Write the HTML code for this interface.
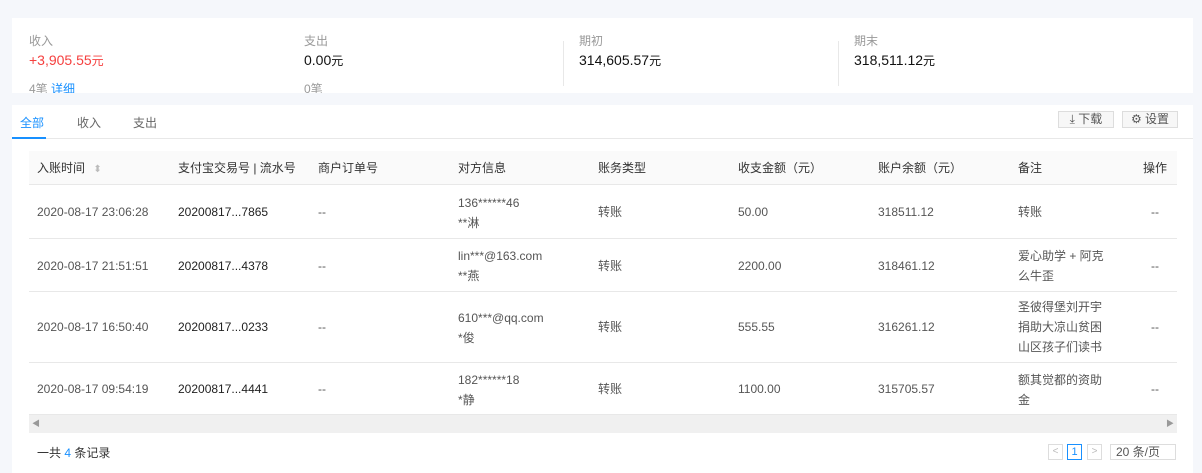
<!DOCTYPE html>
<html><head><meta charset="utf-8"><style>
*{margin:0;padding:0;box-sizing:border-box}
body{width:1202px;height:473px;overflow:hidden;background:#f5f7fb;font-family:"Liberation Sans","Noto Sans CJK SC",sans-serif;font-size:12px;color:#333;position:relative}
.a{position:absolute;white-space:nowrap}
.card1{position:absolute;left:12px;top:18px;width:1181px;height:75px;background:#fff;overflow:hidden}
.card2{position:absolute;left:12px;top:105px;width:1181px;height:368px;background:#fff}
.lbl{color:#999;font-size:12px}
.val{font-size:14px;color:#111}
.sep{position:absolute;top:23px;width:1px;height:45px;background:#e8e8e8}
.hdr{position:absolute;left:29px;top:151px;width:1148px;height:34px;background:#fafafa;border-bottom:1px solid #e8e8e8}
.row{position:absolute;left:29px;width:1148px;border-bottom:1px solid #e8e8e8}
.c{position:absolute;color:#555;font-size:12px;line-height:20px}
.btn{position:absolute;top:111px;height:17px;border:1px solid #ddd;background:#f7f7f7;color:#555;font-size:12px;line-height:15px;text-align:center}
</style></head><body>
<div class="card1">
<div class="a lbl" style="left:17px;top:14px">收入</div>
<div class="a val" style="left:17px;top:34px;color:#f5403f">+3,905.55<span style="font-size:12px">元</span></div>
<div class="a lbl" style="left:17px;top:62px">4笔 <span style="color:#1890ff">详细</span></div>
<div class="a lbl" style="left:292px;top:14px">支出</div>
<div class="a val" style="left:292px;top:34px">0.00<span style="font-size:12px">元</span></div>
<div class="a lbl" style="left:292px;top:62px">0笔</div>
<div class="sep" style="left:551px"></div>
<div class="a lbl" style="left:567px;top:14px">期初</div>
<div class="a val" style="left:567px;top:34px">314,605.57<span style="font-size:12px">元</span></div>
<div class="sep" style="left:826px"></div>
<div class="a lbl" style="left:842px;top:14px">期末</div>
<div class="a val" style="left:842px;top:34px">318,511.12<span style="font-size:12px">元</span></div>
</div>
<div class="card2"></div>
<div class="a" style="left:20px;top:114px;color:#1890ff;font-size:12px">全部</div>
<div class="a" style="left:77px;top:114px;color:#666">收入</div>
<div class="a" style="left:133px;top:114px;color:#666">支出</div>
<div class="a" style="left:12px;top:138px;width:1181px;height:1px;background:#e8e8e8"></div>
<div class="a" style="left:12px;top:137px;width:34px;height:2px;background:#1890ff"></div>
<div class="btn" style="left:1058px;width:56px">⤓ 下载</div>
<div class="btn" style="left:1122px;width:56px">⚙ 设置</div>
<div class="hdr">
<div class="c" style="left:8px;top:7px;color:#333">入账时间 <span style="color:#bbb;font-size:10px;margin-left:5px">⬍</span></div>
<div class="c" style="left:149px;top:7px;color:#333">支付宝交易号 | 流水号</div>
<div class="c" style="left:289px;top:7px;color:#333">商户订单号</div>
<div class="c" style="left:429px;top:7px;color:#333">对方信息</div>
<div class="c" style="left:569px;top:7px;color:#333">账务类型</div>
<div class="c" style="left:709px;top:7px;color:#333">收支金额（元）</div>
<div class="c" style="left:849px;top:7px;color:#333">账户余额（元）</div>
<div class="c" style="left:989px;top:7px;color:#333">备注</div>
<div class="c" style="left:1114px;top:7px;color:#333">操作</div>
</div>
<div class="row" style="top:185px;height:54px">
<div class="c" style="left:8px;top:17px">2020-08-17 23:06:28</div><div class="c" style="left:149px;top:17px;color:#222">20200817...7865</div><div class="c" style="left:289px;top:17px">--</div><div class="c" style="left:429px;top:8px">136******46<br>**淋</div><div class="c" style="left:569px;top:17px">转账</div><div class="c" style="left:709px;top:17px">50.00</div><div class="c" style="left:849px;top:17px">318511.12</div><div class="c" style="left:989px;top:17px">转账</div><div class="c" style="left:1122px;top:17px">--</div></div>
<div class="row" style="top:239px;height:53px">
<div class="c" style="left:8px;top:17px">2020-08-17 21:51:51</div><div class="c" style="left:149px;top:17px;color:#222">20200817...4378</div><div class="c" style="left:289px;top:17px">--</div><div class="c" style="left:429px;top:7px">lin***@163.com<br>**燕</div><div class="c" style="left:569px;top:17px">转账</div><div class="c" style="left:709px;top:17px">2200.00</div><div class="c" style="left:849px;top:17px">318461.12</div><div class="c" style="left:989px;top:7px">爱心助学 + 阿克<br>么牛歪</div><div class="c" style="left:1122px;top:17px">--</div></div>
<div class="row" style="top:292px;height:71px">
<div class="c" style="left:8px;top:25px">2020-08-17 16:50:40</div><div class="c" style="left:149px;top:25px;color:#222">20200817...0233</div><div class="c" style="left:289px;top:25px">--</div><div class="c" style="left:429px;top:16px">610***@qq.com<br>*俊</div><div class="c" style="left:569px;top:25px">转账</div><div class="c" style="left:709px;top:25px">555.55</div><div class="c" style="left:849px;top:25px">316261.12</div><div class="c" style="left:989px;top:5px">圣彼得堡刘开宇<br>捐助大凉山贫困<br>山区孩子们读书</div><div class="c" style="left:1122px;top:25px">--</div></div>
<div class="row" style="top:363px;height:52px">
<div class="c" style="left:8px;top:16px">2020-08-17 09:54:19</div><div class="c" style="left:149px;top:16px;color:#222">20200817...4441</div><div class="c" style="left:289px;top:16px">--</div><div class="c" style="left:429px;top:7px">182******18<br>*静</div><div class="c" style="left:569px;top:16px">转账</div><div class="c" style="left:709px;top:16px">1100.00</div><div class="c" style="left:849px;top:16px">315705.57</div><div class="c" style="left:989px;top:7px">额其觉都的资助<br>金</div><div class="c" style="left:1122px;top:16px">--</div></div>
<div class="a" style="left:29px;top:415px;width:1148px;height:18px;background:#f0f0f0"></div>
<div class="a" style="left:32px;top:418px;color:#999;font-size:8px">◀</div>
<div class="a" style="left:1166px;top:418px;color:#999;font-size:8px">▶</div>
<div class="a" style="left:37px;top:444px;color:#333">一共 <span style="color:#1890ff">4</span> 条记录</div>
<div class="a" style="left:1048px;top:444px;width:15px;height:16px;border:1px solid #ddd;color:#bbb;font-size:10px;text-align:center;line-height:14px">&lt;</div>
<div class="a" style="left:1067px;top:444px;width:15px;height:16px;border:1px solid #1890ff;color:#1890ff;font-size:11px;text-align:center;line-height:14px">1</div>
<div class="a" style="left:1087px;top:444px;width:15px;height:16px;border:1px solid #ddd;color:#bbb;font-size:10px;text-align:center;line-height:14px">&gt;</div>
<div class="a" style="left:1110px;top:444px;width:66px;height:16px;border:1px solid #ddd;color:#555;font-size:12px;line-height:14px;padding-left:5px">20 条/页</div>
</body></html>
